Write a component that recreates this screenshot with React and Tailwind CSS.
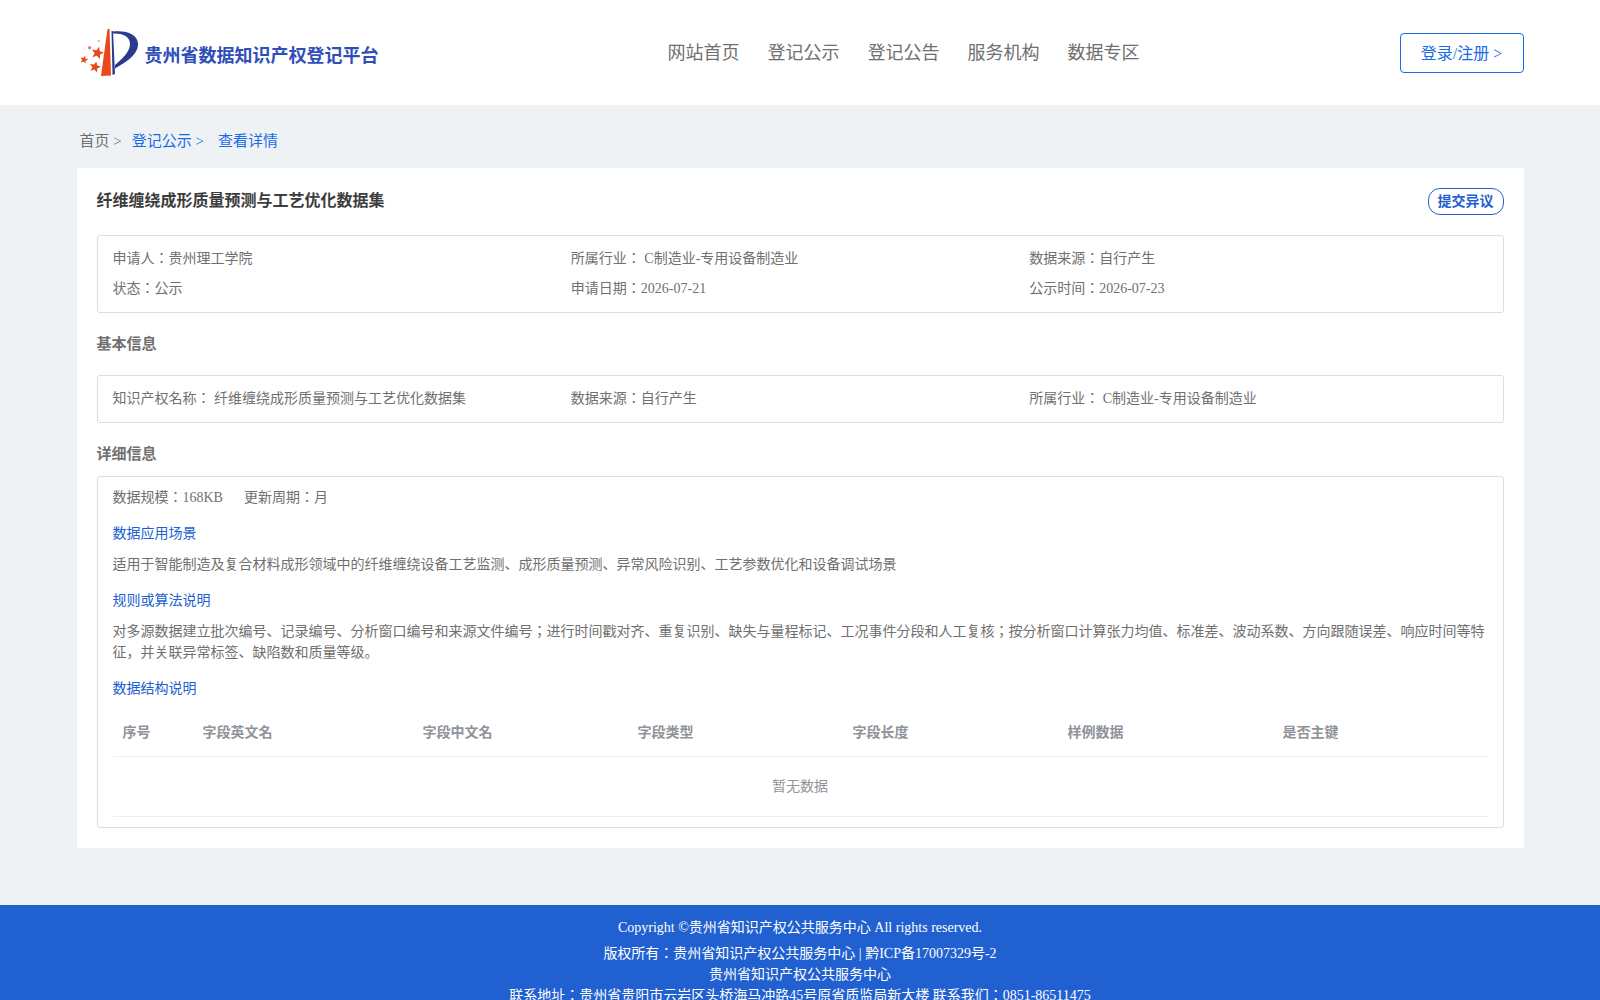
import React from 'react';

const serif = "font-['Liberation_Serif','Noto_Sans_CJK_JP',serif]";

function star(cx, cy, r) {
  const pts = [];
  for (let i = 0; i < 10; i++) {
    const rad = i % 2 === 0 ? r : r * 0.45;
    const a = (Math.PI / 5) * i - Math.PI / 2 + 0.25;
    pts.push(`${(cx + rad * Math.cos(a)).toFixed(2)},${(cy + rad * Math.sin(a)).toFixed(2)}`);
  }
  return pts.join(' ');
}

function Logo() {
  return (
    <svg width="66" height="60" viewBox="0 0 66 60" className="shrink-0">
      <polygon points="24,54 34,53.5 32.5,7 30.5,7" fill="#e8481c" />
      <polygon points="34.5,9 36,9 38,52 35.5,53" fill="#2b3a8f" />
      <path d="M36,9.5 C49,8 61,12 61,22 C61,33 49,40 38,46.5 L38,43 C45,37 53,30 53,22 C53,14 45,11 36,11.5 Z" fill="#2b3a8f" />
      <polygon points={star(20.5, 31, 6.5)} fill="#e8481c" />
      <polygon points={star(18, 45, 5.8)} fill="#e8481c" />
      <polygon points={star(7, 37.7, 4.2)} fill="#e8481c" />
      <circle cx="12.7" cy="25.7" r="1.6" fill="#ec7a55" />
      <circle cx="21.7" cy="19" r="1.1" fill="#ec9a80" />
    </svg>
  );
}

function Info({ children }) {
  return <div className="text-[14px] leading-[30px] text-[#707070]">{children}</div>;
}

function SubTitle({ children }) {
  return <div className="text-[14px] leading-[21px] text-[#2160d0]">{children}</div>;
}

export default function App() {
  const cols = [
    ['序号', 'w-[80px]'],
    ['字段英文名', 'w-[220px]'],
    ['字段中文名', 'w-[215px]'],
    ['字段类型', 'w-[215px]'],
    ['字段长度', 'w-[215px]'],
    ['样例数据', 'w-[215px]'],
    ['是否主键', 'flex-1'],
  ];

  return (
    <div className={`${serif} bg-[#eff2f5] min-h-screen`}>
      <header className="bg-white h-[105px]">
        <div className="mx-auto w-[1447px] h-full flex items-start">
          <div className="flex items-center pt-[22px] w-[591px]">
            <Logo />
            <span className="ml-[2px] mt-[8px] text-[18px] font-bold text-[#2f4fb8]">贵州省数据知识产权登记平台</span>
          </div>
          <nav className="flex gap-[28px] pt-[39px] text-[18px] leading-[28px] text-[#707070]">
            <a>网站首页</a>
            <a>登记公示</a>
            <a>登记公告</a>
            <a>服务机构</a>
            <a>数据专区</a>
          </nav>
          <button className="ml-auto mt-[33px] w-[124px] h-[40px] pt-[1px] rounded-[4px] border border-[#1a6ae6] text-[#1a6ae6] text-[16px]">
            登录/注册 &gt;
          </button>
        </div>
      </header>

      <main className="mx-auto w-[1447px] pb-[57px]">
        <div className="h-[63px] flex items-center pl-[3px] pt-[10px] text-[15px]">
          <span className="text-[#707070]">首页 &gt;</span>
          <span className="ml-[10px] text-[#1a6ae6]">登记公示 &gt;</span>
          <span className="ml-[14px] text-[#1a6ae6]">查看详情</span>
        </div>

        <section className="bg-white px-[20px] pt-[20px] pb-[20px]">
          <div className="flex justify-between items-start h-[47px]">
            <h1 className="text-[16px] font-bold leading-[25px] text-[#3d3d3d]">纤维缠绕成形质量预测与工艺优化数据集</h1>
            <button className="w-[76px] h-[27px] rounded-[12px] border border-[#2160d0] text-[14px] font-bold text-[#2160d0]">
              提交异议
            </button>
          </div>

          <div className="border border-[#dddddd] rounded-[3px] px-[15px] py-[8px] grid grid-cols-3">
            <Info>申请人：贵州理工学院</Info>
            <Info>所属行业： C制造业-专用设备制造业</Info>
            <Info>数据来源：自行产生</Info>
            <Info>状态：公示</Info>
            <Info>申请日期：2026-07-21</Info>
            <Info>公示时间：2026-07-23</Info>
          </div>

          <h2 className="mt-[16px] mb-[15px] text-[15px] font-bold leading-[31px] text-[#707070]">基本信息</h2>

          <div className="border border-[#dddddd] rounded-[3px] px-[15px] py-[8px] grid grid-cols-3">
            <Info>知识产权名称： 纤维缠绕成形质量预测与工艺优化数据集</Info>
            <Info>数据来源：自行产生</Info>
            <Info>所属行业： C制造业-专用设备制造业</Info>
          </div>

          <h2 className="mt-[15px] mb-[5px] text-[15px] font-bold leading-[33px] text-[#707070]">详细信息</h2>

          <div className="border border-[#dddddd] rounded-[3px] px-[15px] pb-[10px]">
            <div className="flex gap-[21px] h-[40px] items-center text-[14px] text-[#707070]">
              <span>数据规模：168KB</span>
              <span>更新周期：月</span>
            </div>
            <div className="mt-[6px]">
              <SubTitle>数据应用场景</SubTitle>
            </div>
            <p className="mt-[10px] text-[14px] leading-[21px] text-[#707070]">
              适用于智能制造及复合材料成形领域中的纤维缠绕设备工艺监测、成形质量预测、异常风险识别、工艺参数优化和设备调试场景
            </p>
            <div className="mt-[15px]">
              <SubTitle>规则或算法说明</SubTitle>
            </div>
            <p className="mt-[10px] text-[14px] leading-[21px] text-[#707070]">
              对多源数据建立批次编号、记录编号、分析窗口编号和来源文件编号；进行时间戳对齐、重复识别、缺失与量程标记、工况事件分段和人工复核；按分析窗口计算张力均值、标准差、波动系数、方向跟随误差、响应时间等特征，并关联异常标签、缺陷数和质量等级。
            </p>
            <div className="mt-[15px]">
              <SubTitle>数据结构说明</SubTitle>
            </div>
            <div className="mt-[10px]">
              <div className="flex h-[48px] items-center border-b border-[#ebeef5] text-[14px] font-bold text-[#909399]">
                {cols.map(([name, width]) => (
                  <div key={name} className={`${width} pl-[10px]`}>{name}</div>
                ))}
              </div>
              <div className="h-[60px] flex items-center justify-center border-b border-[#ebeef5] text-[14px] text-[#909399]">
                暂无数据
              </div>
            </div>
          </div>
        </section>
      </main>

      <footer className="bg-[#2160d0] text-white text-[14px] text-center pt-[12px] pb-[30px] leading-[21px]">
        <div className="mb-[5px]">Copyright ©贵州省知识产权公共服务中心 All rights reserved.</div>
        <div>版权所有：贵州省知识产权公共服务中心 | 黔ICP备17007329号-2</div>
        <div>贵州省知识产权公共服务中心</div>
        <div>联系地址：贵州省贵阳市云岩区头桥海马冲路45号原省质监局新大楼 联系我们：0851-86511475</div>
      </footer>
    </div>
  );
}
